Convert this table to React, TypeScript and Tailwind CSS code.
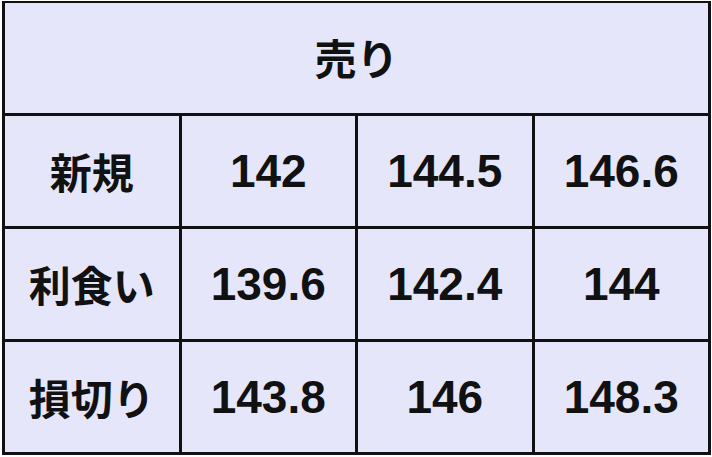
import React from "react";

const rows: [string, string, string, string][] = [
  ["新規", "142", "144.5", "146.6"],
  ["利食い", "139.6", "142.4", "144"],
  ["損切り", "143.8", "146", "148.3"],
];

const jp = "font-['Noto_Sans_CJK_JP','Noto_Sans_CJK_SC',sans-serif] font-bold text-[42px] leading-none text-[#111]";
const num = "font-['Liberation_Sans',Arial,sans-serif] font-bold text-[46px] leading-none text-[#111]";

export default function App() {
  return (
    <div className="w-[712px] h-[457px] bg-white">
      <div className="ml-[2px] mt-[1px] w-[709px] grid grid-cols-4 grid-rows-[110px_110px_110px_110px] gap-[3px] bg-[#111] border-[3px] border-t-2 border-[#111]">
        <div className={`col-span-4 bg-[#E6E6FA] flex items-center justify-center pb-[2px] ${jp}`}>売り</div>
        {rows.map((r) => (
          <React.Fragment key={r[0]}>
            <div className={`bg-[#E6E6FA] flex items-center justify-center ${jp}`}>{r[0]}</div>
            {r.slice(1).map((v, i) => (
              <div key={i} className={`bg-[#E6E6FA] flex items-center justify-center ${num}`}>{v}</div>
            ))}
          </React.Fragment>
        ))}
      </div>
    </div>
  );
}
